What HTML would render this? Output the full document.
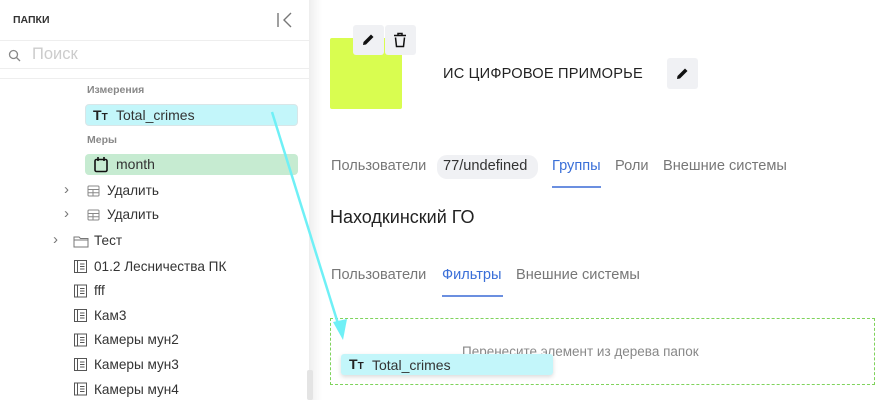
<!DOCTYPE html>
<html><head><meta charset="utf-8"><style>
*{margin:0;padding:0;box-sizing:border-box}
body{width:892px;height:400px;overflow:hidden;background:#fff;font-family:"Liberation Sans","DejaVu Sans",sans-serif;position:relative;color:#222}
.a{position:absolute;white-space:nowrap}
.side{position:absolute;left:0;top:0;width:310px;height:400px;background:#fff;border-right:1px solid #eee}
.shadow{position:absolute;left:310px;top:0;width:12px;height:400px;background:linear-gradient(90deg,#f0f0f0,#fff)}
.t{font-size:13.6px;color:#333}
.ic{position:absolute}
.tab{font-size:14.6px;color:#777}
.ch{font-size:15px;color:#777}
</style></head><body>
<div class="side"></div>
<div class="shadow"></div>
<div class="a" style="left:13px;top:14px;font-size:10.5px;font-weight:bold;color:#333">ПАПКИ</div>
<svg class="ic" style="left:276px;top:11px" width="18" height="18" viewBox="0 0 18 18"><path d="M2 2v14M15 2L8 9l7 7" stroke="#777" stroke-width="1.4" fill="none"/></svg>
<div class="a" style="left:0;top:40px;width:310px;height:1px;background:#eee"></div>
<svg class="ic" style="left:8px;top:49px" width="13" height="13" viewBox="0 0 13 13"><circle cx="5.5" cy="5.5" r="4" stroke="#888" stroke-width="1.3" fill="none"/><path d="M8.5 8.5l3.5 3.5" stroke="#888" stroke-width="1.3"/></svg>
<div class="a" style="left:32px;top:45px;font-size:16.5px;color:#ccc">Поиск</div>
<div class="a" style="left:0;top:68px;width:310px;height:1px;background:#eee"></div>
<div class="a" style="left:0;top:78px;width:310px;height:1px;background:#eee"></div>
<div class="a" style="left:87px;top:84px;font-size:10.5px;font-weight:bold;color:#888">Измерения</div>
<div class="a" style="left:85px;top:104px;width:213px;height:22px;background:#c3f6fa;border:1px solid #d8e6e8;border-radius:4px"></div>
<div class="a" style="left:93px;top:107px;font-size:14px;font-weight:bold;color:#222">T<span style="font-size:10px">T</span></div>
<div class="a t" style="left:116px;top:107px;font-size:14px">Total_crimes</div>
<div class="a" style="left:87px;top:134px;font-size:10.5px;font-weight:bold;color:#888">Меры</div>
<div class="a" style="left:85px;top:154px;width:213px;height:21px;background:#c6ebd1;border-radius:4px"></div>
<svg class="ic" style="left:93px;top:156px" width="16" height="17" viewBox="0 0 16 17"><rect x="2" y="3.5" width="12" height="12" rx="1.5" stroke="#111" stroke-width="1.6" fill="none"/><path d="M5 1v4M11 1v4" stroke="#111" stroke-width="1.6"/></svg>
<div class="a t" style="left:116px;top:156px;font-size:14px">month</div>
<div class="a ch" style="left:64px;top:181px">›</div>
<svg class="ic" style="left:87px;top:185px" width="13" height="12" viewBox="0 0 13 12"><rect x="1" y="1" width="11" height="10" rx="1" stroke="#888" fill="none"/><path d="M1 4.5h11M1 7.8h11M6 4.5v6.5" stroke="#888"/></svg>
<div class="a t" style="left:107px;top:183px">Удалить</div>
<div class="a ch" style="left:64px;top:205px">›</div>
<svg class="ic" style="left:87px;top:209px" width="13" height="12" viewBox="0 0 13 12"><rect x="1" y="1" width="11" height="10" rx="1" stroke="#888" fill="none"/><path d="M1 4.5h11M1 7.8h11M6 4.5v6.5" stroke="#888"/></svg>
<div class="a t" style="left:107px;top:207px">Удалить</div>
<div class="a ch" style="left:53px;top:231px">›</div>
<svg class="ic" style="left:73px;top:235px" width="16" height="13" viewBox="0 0 16 13"><path d="M1 2h5l1.5 1.5H15V12H1z" stroke="#777" fill="none"/><path d="M1 5h14" stroke="#777"/></svg>
<div class="a t" style="left:94px;top:233px">Тест</div>
<svg class="ic" style="left:74px;top:259px" width="14" height="140" viewBox="0 0 14 140">
<g stroke="#555" fill="none" stroke-width="1">
<g id="d"><rect x="0.5" y="1.5" width="12" height="12"/><path d="M3.5 1.5v12M6 5h4.5M6 7.5h4.5M6 10h4.5"/></g>
<use href="#d" y="24.5"/><use href="#d" y="49"/><use href="#d" y="73.5"/><use href="#d" y="98"/><use href="#d" y="122.5"/>
</g></svg>
<div class="a t" style="left:94px;top:259px">01.2 Лесничества ПК</div>
<div class="a t" style="left:94px;top:283px">fff</div>
<div class="a t" style="left:94px;top:308px">Кам3</div>
<div class="a t" style="left:94px;top:332px">Камеры мун2</div>
<div class="a t" style="left:94px;top:357px">Камеры мун3</div>
<div class="a t" style="left:94px;top:382px">Камеры мун4</div>
<div class="a" style="left:307px;top:370px;width:6px;height:30px;background:#e4e4e4;border-radius:2px"></div>
<div class="a" style="left:330px;top:38px;width:72px;height:71px;background:#d9fd50;border-radius:2px"></div>
<div class="a" style="left:353px;top:25px;width:31px;height:30px;background:#f0f1f4;border-radius:3px"></div>
<div class="a" style="left:385px;top:25px;width:31px;height:30px;background:#f0f1f4;border-radius:3px"></div>
<svg class="ic" style="left:362px;top:33px" width="13" height="13" viewBox="0 0 13 13"><path d="M1 12l.5-3L9 1.5l2.5 2.5L4 11.5z" fill="#111"/></svg>
<svg class="ic" style="left:393px;top:32px" width="14" height="16" viewBox="0 0 14 16"><path d="M1 3.5h12M5 3.5V1.5h4v2M2.5 5.5l1 9h7l1-9" stroke="#111" stroke-width="1.5" fill="none"/></svg>
<div class="a" style="left:443px;top:66px;font-size:14.6px;color:#222;letter-spacing:0.2px">ИС ЦИФРОВОЕ ПРИМОРЬЕ</div>
<div class="a" style="left:667px;top:58px;width:31px;height:31px;background:#f0f1f4;border-radius:3px"></div>
<svg class="ic" style="left:676px;top:67px" width="13" height="13" viewBox="0 0 13 13"><path d="M1 12l.5-3L9 1.5l2.5 2.5L4 11.5z" fill="#111"/></svg>
<div class="a tab" style="left:331px;top:158px">Пользователи</div>
<div class="a" style="left:437px;top:155px;width:101px;height:24px;background:#f0f1f4;border-radius:10px"></div>
<div class="a tab" style="left:443px;top:158px;color:#333">77/undefined</div>
<div class="a tab" style="left:552px;top:158px;color:#3a6fd8">Группы</div>
<div class="a" style="left:552px;top:186px;width:49px;height:1.5px;background:#6b8fe0"></div>
<div class="a tab" style="left:615px;top:158px">Роли</div>
<div class="a tab" style="left:663px;top:158px">Внешние системы</div>
<div class="a" style="left:330px;top:207px;font-size:18px;color:#222">Находкинский ГО</div>
<div class="a tab" style="left:331px;top:267px">Пользователи</div>
<div class="a tab" style="left:442px;top:267px;color:#3a6fd8">Фильтры</div>
<div class="a" style="left:442px;top:295px;width:61px;height:1.5px;background:#6b8fe0"></div>
<div class="a tab" style="left:516px;top:267px">Внешние системы</div>
<div class="a" style="left:330px;top:318px;width:545px;height:67px;border:1px dashed #7fd35c"></div>
<div class="a" style="left:462px;top:344px;font-size:13.5px;color:#888">Перенесите элемент из дерева папок</div>
<div class="a" style="left:341px;top:354px;width:212px;height:21px;background:#c3f6fa;border-radius:3px;box-shadow:0 2px 5px rgba(0,0,0,.15)"></div>
<div class="a" style="left:349px;top:356px;font-size:14px;font-weight:bold;color:#222">T<span style="font-size:10px">T</span></div>
<div class="a t" style="left:372px;top:357px;font-size:14px">Total_crimes</div>
<svg class="ic" style="left:0;top:0" width="892" height="400"><path d="M272 112L340 330" stroke="#6ff0f6" stroke-width="2.5"/><path d="M333 322L343 340 347 319z" fill="#6ff0f6"/></svg>
</body></html>
